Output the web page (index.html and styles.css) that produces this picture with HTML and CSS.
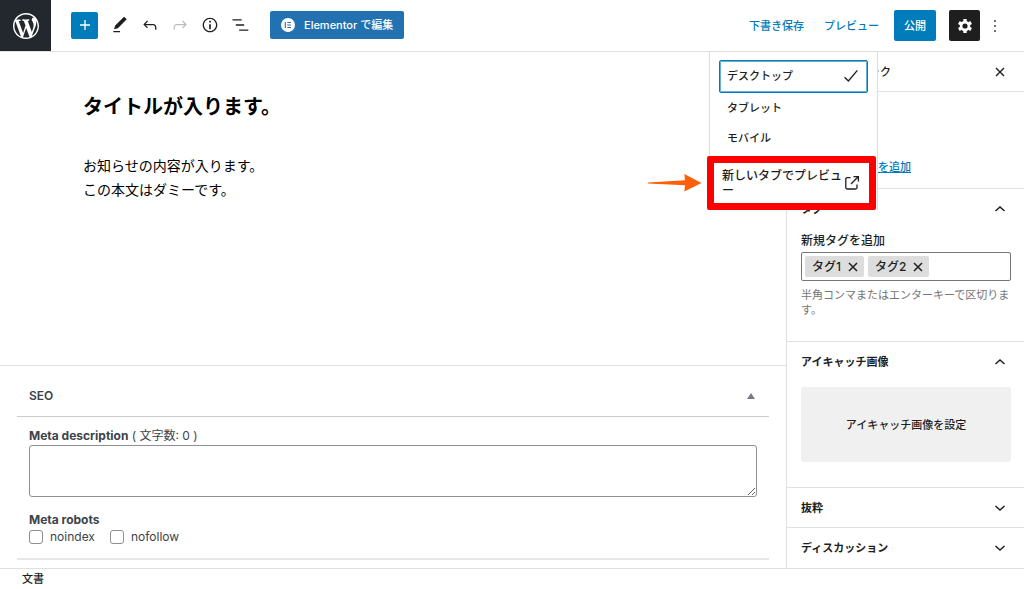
FILE: index.html
```html
<!DOCTYPE html>
<html lang="ja">
<head>
<meta charset="utf-8">
<meta name="viewport" content="width=device-width, initial-scale=1">
<title>投稿を編集</title>
<link rel="stylesheet" href="styles.css">
</head>
<body>
<div class="editor">
  <header class="topbar">
    <a class="home" href="#" aria-label="投稿一覧">
      <svg width="26" height="26" viewBox="0 0 20 20" fill="currentColor"><path d="M20 10c0-5.51-4.49-10-10-10C4.48 0 0 4.49 0 10c0 5.52 4.48 10 10 10 5.51 0 10-4.48 10-10zM7.78 15.37L4.37 6.22c.55-.02 1.17-.08 1.17-.08.5-.06.44-1.13-.06-1.11 0 0-1.45.11-2.37.11-.18 0-.37 0-.58-.01C4.12 2.69 6.87 1.11 10 1.11c2.33 0 4.45.87 6.05 2.34-.68-.11-1.65.39-1.65 1.58 0 .74.45 1.36.9 2.1.35.61.55 1.36.55 2.46 0 1.49-1.4 5-1.4 5l-3.03-8.37c.54-.02.82-.17.82-.17.5-.05.44-1.25-.06-1.22 0 0-1.44.12-2.38.12-.87 0-2.33-.12-2.33-.12-.5-.03-.56 1.2-.06 1.22l.92.08 1.26 3.41zM17.41 10c.24-.64.74-1.87.43-4.25.7 1.29 1.05 2.71 1.05 4.25 0 3.29-1.73 6.24-4.4 7.78.97-2.59 1.94-5.2 2.92-7.78zM6.1 18.09C3.12 16.65 1.11 13.53 1.11 10c0-1.3.23-2.48.72-3.59C3.25 10.3 4.67 14.2 6.1 18.09zm4.03-6.63l2.58 6.98c-.86.29-1.76.45-2.71.45-.79 0-1.57-.11-2.29-.33.81-2.38 1.62-4.74 2.42-7.1z"/></svg>
    </a>
    <div class="tools">
      <button class="add" aria-label="ブロックを追加"><svg width="20" height="20" viewBox="0 0 24 24" fill="currentColor"><path d="M18 11.2h-5.2V6h-1.6v5.2H6v1.6h5.2V18h1.6v-5.2H18z"/></svg></button>
      <button class="tool" aria-label="ツール"><svg width="20" height="20" viewBox="0 0 24 24" fill="currentColor"><path d="M20.1 5.1L16.9 2 6.2 12.7l-1.3 4.4 4.5-1.3L20.1 5.1zM4 20.8h8v-1.5H4v1.5z"/></svg></button>
      <button class="tool" aria-label="元に戻す"><svg width="20" height="20" viewBox="0 0 24 24" fill="currentColor"><path d="M18.3 11.7c-.6-.6-1.4-.9-2.3-.9H6.7l2.9-3.3-1.1-1-4.5 5L8.5 16l1-1-2.7-2.7H16c.5 0 .9.2 1.3.5 1 1 1 3.4 1 4.5v.3h1.5v-.2c0-1.5 0-4.3-1.5-5.7z"/></svg></button>
      <button class="tool" aria-label="やり直す" disabled><svg width="20" height="20" viewBox="0 0 24 24" fill="currentColor"><path d="M15.6 6.5l-1.1 1 2.9 3.3H8c-.9 0-1.7.3-2.3.9-1.4 1.5-1.4 4.2-1.4 5.6v.2h1.5v-.3c0-1.1 0-3.5 1-4.5.3-.3.7-.5 1.3-.5h9.2L14.5 15l1.1 1.1 4.6-4.6-4.6-5z"/></svg></button>
      <button class="tool" aria-label="詳細"><svg width="20" height="20" viewBox="0 0 24 24" fill="currentColor"><path d="M12 3.2c-4.8 0-8.8 3.9-8.8 8.8 0 4.8 3.9 8.8 8.8 8.8 4.8 0 8.8-3.9 8.8-8.8 0-4.8-4-8.8-8.8-8.8zm0 16c-4 0-7.2-3.3-7.2-7.2C4.8 8 8 4.8 12 4.8s7.2 3.3 7.2 7.2c0 4-3.2 7.2-7.2 7.2zM11 17h2v-6h-2v6zm0-8h2V7h-2v2z"/></svg></button>
      <button class="tool" aria-label="リスト表示"><svg width="20" height="20" viewBox="0 0 24 24" fill="currentColor"><path d="M3 5h11v1.6H3zM7 11.2h10v1.6H7zM11 17.4h11V19H11z"/></svg></button>
      <button class="elementor">
        <svg width="14" height="14" viewBox="0 0 14 14"><circle cx="7" cy="7" r="7" fill="#fff"/><path d="M4.3 4v6M6.3 4.5h3.6M6.3 7h3.6M6.3 9.5h3.6" stroke="#2271b1" stroke-width="1.1"/></svg>
        <span>Elementor で編集</span>
      </button>
    </div>
    <div class="actions">
      <button class="text-button">下書き保存</button>
      <div class="preview">
        <button class="text-button" aria-expanded="true">プレビュー</button>
        <div class="menu" role="menu">
          <button class="item selected" role="menuitemradio" aria-checked="true">デスクトップ<svg width="20" height="20" viewBox="0 0 24 24" fill="none" stroke="currentColor" stroke-width="1.6"><path d="M4.3 13.4l4.6 4.5L19.6 5.2"/></svg></button>
          <button class="item" role="menuitemradio" aria-checked="false">タブレット</button>
          <button class="item" role="menuitemradio" aria-checked="false">モバイル</button>
          <a class="new-tab" role="menuitem" href="#"><span>新しいタブでプレビュー</span><svg width="16" height="16" viewBox="0 0 16 16" fill="none" stroke="currentColor" stroke-width="1.3"><path d="M6.5 2.6H3.2a1.4 1.4 0 0 0-1.4 1.4v8.6A1.4 1.4 0 0 0 3.2 14h8.4a1.4 1.4 0 0 0 1.4-1.4V9.5M9.5 1.6h4.9v4.9M14.2 1.8L7 9"/></svg></a>
          <svg class="arrow" width="54" height="18" viewBox="0 0 54 18" fill="#ff5f08" aria-hidden="true"><path d="M0 8.6L37 6.2 36.3 0 53.5 9 36.3 17.5 37 11.2 0 9.6z"/></svg>
        </div>
      </div>
      <button class="publish">公開</button>
      <button class="settings" aria-label="設定"><svg width="20" height="20" viewBox="0 0 24 24" fill="none" stroke="currentColor"><circle cx="12" cy="12" r="4.7" stroke-width="3.2"/><path d="M12 3.5v3M12 17.5v3M4.640 7.750l2.6 1.5M16.760 14.750l2.6 1.5M4.640 16.250l2.6-1.5M16.760 9.250l2.6-1.5" stroke-width="4"/></svg></button>
      <button class="more" aria-label="オプション"><svg width="20" height="20" viewBox="0 0 24 24" fill="currentColor"><path d="M13 19h-2v-2h2v2zm0-6h-2v-2h2v2zm0-6h-2V5h2v2z"/></svg></button>
    </div>
  </header>

  <div class="body">
    <main class="main">
      <article class="post">
        <h1>タイトルが入ります。</h1>
        <p>お知らせの内容が入ります。<br>この本文はダミーです。</p>
      </article>
      <section class="metaboxes">
        <div class="metabox">
          <h2 class="meta-title">SEO <button aria-label="パネルを閉じる"><svg width="8" height="6" viewBox="0 0 8 6" fill="#787c82"><path d="M4 0l4 6H0z"/></svg></button></h2>
          <div class="meta-content">
            <label for="description"><b>Meta description</b> ( 文字数: 0 )</label>
            <textarea id="description"></textarea>
            <fieldset>
              <legend>Meta robots</legend>
              <div class="checks">
                <label><input type="checkbox">noindex</label>
                <label><input type="checkbox">nofollow</label>
              </div>
            </fieldset>
          </div>
        </div>
      </section>
    </main>

    <aside class="sidebar">
      <div class="tabs">
        <button>ブロック</button>
        <button class="close" aria-label="設定を閉じる"><svg width="10" height="10" viewBox="0 0 10 10" stroke="currentColor" stroke-width="1.4"><path d="M1 1l8 8M9 1L1 9"/></svg></button>
      </div>
      <section class="panel categories"><a href="#">を追加</a></section>
      <section class="panel">
        <h2><button>タグ<svg width="12" height="8" viewBox="0 0 12 8" fill="none" stroke="currentColor" stroke-width="1.5"><path d="M1.5 6L6 2l4.5 4"/></svg></button></h2>
        <div class="tags">
          <label for="tag">新規タグを追加</label>
          <div class="tokens">
            <span class="token">タグ1<button aria-label="タグ1を削除"><svg width="10" height="10" viewBox="0 0 10 10" stroke="currentColor" stroke-width="1.5"><path d="M1 1l8 8M9 1L1 9"/></svg></button></span>
            <span class="token">タグ2<button aria-label="タグ2を削除"><svg width="10" height="10" viewBox="0 0 10 10" stroke="currentColor" stroke-width="1.5"><path d="M1 1l8 8M9 1L1 9"/></svg></button></span>
            <input id="tag" type="text">
          </div>
          <p>半角コンマまたはエンターキーで区切ります。</p>
        </div>
      </section>
      <section class="panel">
        <h2><button>アイキャッチ画像<svg width="12" height="8" viewBox="0 0 12 8" fill="none" stroke="currentColor" stroke-width="1.5"><path d="M1.5 6L6 2l4.5 4"/></svg></button></h2>
        <div class="featured"><button>アイキャッチ画像を設定</button></div>
      </section>
      <section class="panel"><h2><button>抜粋<svg width="12" height="8" viewBox="0 0 12 8" fill="none" stroke="currentColor" stroke-width="1.5"><path d="M1.5 2L6 6l4.5-4"/></svg></button></h2></section>
      <section class="panel"><h2><button>ディスカッション<svg width="12" height="8" viewBox="0 0 12 8" fill="none" stroke="currentColor" stroke-width="1.5"><path d="M1.5 2L6 6l4.5-4"/></svg></button></h2></section>
    </aside>
  </div>
  <footer class="footer">文書</footer>
</div>
</body>
</html>
```

FILE: styles.css
```css
* { box-sizing: border-box; }
body {
  margin: 0;
  color: #1e1e1e;
  background: #fff;
  font: 500 11px/16px Inter, "Noto Sans CJK JP", sans-serif;
}
button {
  display: flex;
  align-items: center;
  padding: 0;
  border: 0;
  background: none;
  color: inherit;
  font: inherit;
}
svg { display: block; flex: none; }
h1, h2, p { margin: 0; }
a { color: #007cba; }

.editor {
  display: grid;
  grid-template-rows: auto 1fr auto;
  min-height: 100vh;
}
.topbar {
  display: flex;
  align-items: center;
  height: 52px;
  border-bottom: 1px solid #e0e0e0;
}
.home {
  display: grid;
  place-items: center;
  align-self: stretch;
  width: 51px;
  background: #23282e;
  color: #fff;
}
.tools {
  display: flex;
  align-items: center;
  gap: 10px;
  margin-left: 20px;
  padding-bottom: 1px;
}
.tool { justify-content: center; width: 20px; height: 28px; }
.tool:disabled { color: #bbb; }
.add {
  justify-content: center;
  width: 27px;
  height: 27px;
  margin-right: 2px;
  border-radius: 2px;
  background: #007cba;
  color: #fff;
}
.elementor {
  gap: 9px;
  height: 28px;
  margin-left: 10px;
  padding: 0 11px;
  border-radius: 2px;
  background: #2271b1;
  color: #fff;
}
.actions {
  display: flex;
  align-items: center;
  margin-left: auto;
  padding-right: 19px;
}
.text-button { height: 50px; color: #007cba; }
.preview { position: relative; margin: 0 15px 0 20px; }
.publish {
  height: 31px;
  padding: 0 10px;
  border-radius: 2px;
  background: #007cba;
  color: #fff;
}
.settings {
  justify-content: center;
  width: 31px;
  height: 31px;
  margin: 0 5px 0 13px;
  border-radius: 2px;
  background: #1e1e1e;
  color: #fff;
}
.menu {
  position: absolute;
  z-index: 2;
  top: 100%;
  right: 1px;
  width: 169px;
  padding: 8px 9px 0;
  border: 1px solid #ddd;
  border-bottom: 0;
  background: #fff;
}
.item {
  width: 100%;
  height: 30px;
  padding: 0 8px;
}
.selected {
  justify-content: space-between;
  height: 33px;
  padding: 0 6px 0 7px;
  border: 1px solid #007cba;
  border-radius: 2px;
  box-shadow: inset 0 0 0 1px #66b0d6;
  background: #fff;
}
.new-tab {
  display: flex;
  align-items: center;
  justify-content: space-between;
  height: 54px;
  margin: 3px -8px 0 -12px;
  padding: 0 9px 0 8px;
  border: 7px solid #f00;
  border-radius: 2px;
  background: #fff;
  color: inherit;
  font-size: 12px;
  line-height: 15px;
  text-decoration: none;
}
.new-tab span { flex: 0 0 120px; }
.arrow {
  position: absolute;
  right: 175px;
  bottom: 18px;
}

.body {
  display: grid;
  grid-template-columns: minmax(0, 1fr) 238px;
}
.main { display: flex; flex-direction: column; }
.post { flex: 1; padding: 38px 83px; color: #000; }
h1 { font-size: 20px; line-height: 34px; font-weight: 700; }
.post p {
  margin-top: 30px;
  font-size: 14px;
  line-height: 24px;
  font-weight: 400;
}
.metaboxes {
  padding: 1px 17px 8px;
  border-top: 1px solid #e0e0e0;
  color: #3c434a;
}
.metabox { border-bottom: 2px solid #e8e8e8; }
.meta-title {
  display: flex;
  align-items: center;
  justify-content: space-between;
  height: 50px;
  padding: 8px 14px 0 12px;
  border-bottom: 1px solid #ccc;
  font-size: 12px;
  font-weight: 600;
}
.meta-content {
  padding: 11px 12px 13px;
  font-size: 12px;
  font-weight: 400;
}
.meta-content > label { display: block; }
b, legend { font-weight: 700; }
textarea {
  display: block;
  width: 100%;
  height: 52px;
  margin-top: 1px;
  border: 1px solid #8c8f94;
  border-radius: 3px;
}
fieldset { margin: 15px 0 0; padding: 0; border: 0; }
legend { padding: 0; }
.checks { display: flex; gap: 15px; padding-top: 1px; }
.checks label { display: flex; align-items: center; gap: 7px; }
.checks input {
  appearance: none;
  width: 14px;
  height: 14px;
  margin: 0;
  border: 1px solid #8c8f94;
  border-radius: 3px;
}

.sidebar { border-left: 1px solid #e0e0e0; }
.tabs {
  display: flex;
  align-items: center;
  height: 40px;
  padding: 0 19px 0 60px;
  border-bottom: 1px solid #e0e0e0;
}
.close { margin-left: auto; }
.panel { border-bottom: 1px solid #e0e0e0; }
.panel:last-child { border-bottom: 0; }
.categories { padding: 67px 14px 13px 91px; }
.panel h2 { font: inherit; font-weight: 600; }
.panel h2 button {
  justify-content: space-between;
  width: 100%;
  height: 39px;
  padding: 0 18px 0 14px;
}
.tags { padding: 5px 13px 23px 14px; }
.tags label { display: block; font-size: 12px; }
.tokens {
  display: flex;
  gap: 4px;
  height: 29px;
  margin-top: 3px;
  padding: 3px;
  border: 1px solid #757575;
  border-radius: 2px;
}
.token {
  display: flex;
  align-items: center;
  gap: 7px;
  padding: 0 6px 0 7px;
  border-radius: 2px;
  background: #ddd;
  font-size: 12px;
}
.tokens input {
  flex: 1;
  min-width: 0;
  padding: 0;
  border: 0;
  outline: 0;
  font: inherit;
}
.tags p {
  margin-top: 7px;
  color: #757575;
  line-height: 15px;
  font-weight: 400;
}
.featured { padding: 6px 13px 25px 14px; }
.featured button {
  justify-content: center;
  width: 100%;
  height: 75px;
  border-radius: 2px;
  background: #f0f0f0;
}
.footer {
  padding: 2px 22px;
  border-top: 1px solid #e0e0e0;
}
```
